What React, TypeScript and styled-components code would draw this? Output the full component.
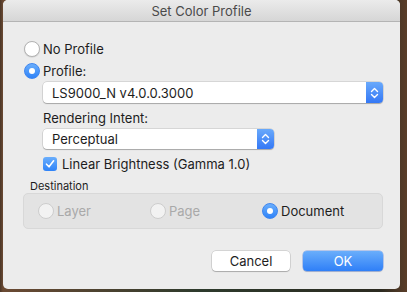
import React, { useState } from "react";
import styled, { createGlobalStyle } from "styled-components";

const GlobalStyle = createGlobalStyle`
  html, body {
    margin: 0;
    padding: 0;
    width: 407px;
    height: 292px;
    overflow: hidden;
    background: linear-gradient(90deg, #4a3526 0px, #6b4a33 3px, #2d3a2c 200px, #2b2a20 380px, #5a3d28 407px);
  }
  * {
    box-sizing: border-box;
  }
`;

const Window = styled.div`
  width: 397px;
  height: 289px;
  margin-left: 3px;
  background: #ececec;
  border-radius: 5px;
  overflow: hidden;
  display: flex;
  flex-direction: column;
  font-family: Inter, "Liberation Sans", Arial, sans-serif;
  font-size: 13px;
  color: #1d1d1d;
`;

const TitleBar = styled.div`
  height: 22px;
  flex: none;
  display: flex;
  align-items: center;
  justify-content: center;
  background: linear-gradient(#ebebeb, #d6d6d6);
  border-bottom: 1px solid #b4b4b4;
  color: #4a4a4a;
  font-size: 13px;
`;

const Body = styled.div`
  flex: 1;
  display: flex;
  flex-direction: column;
  padding: 18px 17px 18px 21px;
`;

const RadioRow = styled.label<{ $gap?: number }>`
  display: flex;
  align-items: center;
  height: 18px;
  gap: 3px;
  margin-top: ${(p) => p.$gap ?? 0}px;
`;

const RadioDot = styled.span<{ $on?: boolean; $disabled?: boolean }>`
  width: 16px;
  height: 16px;
  flex: none;
  border-radius: 50%;
  display: flex;
  align-items: center;
  justify-content: center;
  background: ${(p) =>
    p.$on
      ? "linear-gradient(#6aaefc, #2f83f8)"
      : p.$disabled
      ? "#f2f2f2"
      : "#ffffff"};
  border: 1px solid
    ${(p) => (p.$on ? "#3f86ef" : p.$disabled ? "#cdcdcd" : "#b3b3b3")};
  box-shadow: ${(p) => (p.$on || p.$disabled ? "none" : "0 0.5px 1px rgba(0,0,0,0.15)")};

  &::after {
    content: "";
    display: ${(p) => (p.$on ? "block" : "none")};
    width: 6px;
    height: 6px;
    border-radius: 50%;
    background: #ffffff;
  }
`;

const RadioText = styled.span<{ $disabled?: boolean }>`
  color: ${(p) => (p.$disabled ? "#a9a9a9" : "#1d1d1d")};
`;

const Indented = styled.div`
  display: flex;
  flex-direction: column;
  padding-left: 19px;
`;

const Popup = styled.div<{ $width: number; $height: number; $gap: number }>`
  width: ${(p) => p.$width}px;
  height: ${(p) => p.$height}px;
  margin-top: ${(p) => p.$gap}px;
  display: flex;
  align-items: stretch;
  background: #ffffff;
  border-radius: 4px;
  box-shadow: 0 0 0 0.5px rgba(0, 0, 0, 0.18), 0 1px 1px rgba(0, 0, 0, 0.22);
  overflow: hidden;
`;

const PopupValue = styled.span`
  flex: 1;
  display: flex;
  align-items: center;
  padding-left: 9px;
  font-size: 13px;
`;

const Stepper = styled.span`
  width: 17px;
  flex: none;
  display: flex;
  align-items: center;
  justify-content: center;
  background: linear-gradient(#69a9fb, #3478f6);
`;

const Label = styled.div<{ $gap: number }>`
  margin-top: ${(p) => p.$gap}px;
  height: 16px;
  line-height: 16px;
`;

const CheckRow = styled.label`
  display: flex;
  align-items: center;
  gap: 5px;
  height: 16px;
  margin-top: 7px;
`;

const CheckBox = styled.span`
  width: 14px;
  height: 14px;
  border-radius: 3px;
  background: linear-gradient(#6aaefc, #2f83f8);
  display: flex;
  align-items: center;
  justify-content: center;
`;

const GroupTitle = styled.div`
  margin: 7px 0 0 6px;
  height: 14px;
  line-height: 14px;
  font-size: 11px;
  color: #1d1d1d;
`;

const GroupBox = styled.div`
  margin-left: -1px;
  height: 36px;
  display: grid;
  grid-template-columns: 112px 112px 1fr;
  align-items: center;
  padding-left: 14px;
  background: #e3e3e3;
  border: 1px solid #d8d8d8;
  border-radius: 5px;
`;

const Buttons = styled.div`
  margin-top: 22px;
  display: flex;
  justify-content: flex-end;
  gap: 13px;
`;

const PushButton = styled.button<{ $primary?: boolean }>`
  width: ${(p) => (p.$primary ? 80 : 78)}px;
  height: 20px;
  padding: 0;
  border: none;
  border-radius: 4px;
  font-family: inherit;
  font-size: 13px;
  color: ${(p) => (p.$primary ? "#ffffff" : "#1d1d1d")};
  background: ${(p) =>
    p.$primary ? "linear-gradient(#6aaefb, #2f7ff7)" : "#ffffff"};
  box-shadow: ${(p) =>
    p.$primary
      ? "0 0 0 0.5px rgba(30,90,220,0.5), 0 1px 1px rgba(0,0,0,0.15)"
      : "0 0 0 0.5px rgba(0,0,0,0.2), 0 1px 1px rgba(0,0,0,0.2)"};
`;

const Chevrons = () => (
  <svg width="9" height="12" viewBox="0 0 9 12" fill="none">
    <path d="M1.5 4.5 L4.5 1.5 L7.5 4.5" stroke="#fff" strokeWidth="1.4" strokeLinecap="round" strokeLinejoin="round" />
    <path d="M1.5 7.5 L4.5 10.5 L7.5 7.5" stroke="#fff" strokeWidth="1.4" strokeLinecap="round" strokeLinejoin="round" />
  </svg>
);

const Check = () => (
  <svg width="10" height="10" viewBox="0 0 10 10" fill="none">
    <path d="M1.5 5.2 L4 7.8 L8.6 1.8" stroke="#fff" strokeWidth="1.6" strokeLinecap="round" strokeLinejoin="round" />
  </svg>
);

const destinations = [
  { name: "Layer", disabled: true },
  { name: "Page", disabled: true },
  { name: "Document", disabled: false },
];

export default function App() {
  const [profile] = useState("profile");
  const [dest] = useState("Document");

  return (
    <>
      <GlobalStyle />
      <Window>
        <TitleBar>Set Color Profile</TitleBar>
        <Body>
          <RadioRow>
            <RadioDot $on={profile === "none"} />
            <RadioText>No Profile</RadioText>
          </RadioRow>
          <RadioRow $gap={4}>
            <RadioDot $on={profile === "profile"} />
            <RadioText>Profile:</RadioText>
          </RadioRow>
          <Indented>
            <Popup $width={340} $height={21} $gap={2}>
              <PopupValue>LS9000_N v4.0.0.3000</PopupValue>
              <Stepper>
                <Chevrons />
              </Stepper>
            </Popup>
            <Label $gap={7}>Rendering Intent:</Label>
            <Popup $width={231} $height={20} $gap={3}>
              <PopupValue>Perceptual</PopupValue>
              <Stepper>
                <Chevrons />
              </Stepper>
            </Popup>
            <CheckRow>
              <CheckBox>
                <Check />
              </CheckBox>
              Linear Brightness (Gamma 1.0)
            </CheckRow>
          </Indented>
          <GroupTitle>Destination</GroupTitle>
          <GroupBox>
            {destinations.map((d) => (
              <RadioRow key={d.name}>
                <RadioDot $on={dest === d.name} $disabled={d.disabled} />
                <RadioText $disabled={d.disabled}>{d.name}</RadioText>
              </RadioRow>
            ))}
          </GroupBox>
          <Buttons>
            <PushButton>Cancel</PushButton>
            <PushButton $primary>OK</PushButton>
          </Buttons>
        </Body>
      </Window>
    </>
  );
}
